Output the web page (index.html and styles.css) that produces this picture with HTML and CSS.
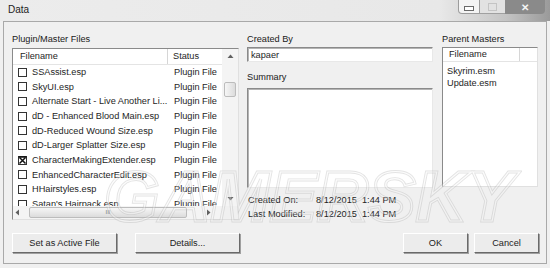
FILE: index.html
```html
<!DOCTYPE html>
<html lang="en">
<head>
  <meta charset="UTF-8" />
  <title>Data</title>
  <link rel="stylesheet" href="styles.css">
</head>
<body>
  <div class="titlebar">
    <span class="title">Data</span>
    <div class="controls">
      <div class="ctl ctl-min"><span></span></div>
      <div class="ctl ctl-max"><span></span></div>
      <div class="ctl ctl-close">&#x2715;</div>
    </div>
  </div>

  <div class="client">
    <div class="main">
      <div class="col-left">
        <div class="label label-left">Plugin/Master Files</div>
        <div class="listview">
          <div class="lv-body">
            <div class="lv-head">
              <div class="hcell hcell-name">Filename</div>
              <div class="hcell hcell-status">Status</div>
            </div>
            <div class="lv-rows">
              <div class="row"><div class="cell-name"><span class="chk"></span>SSAssist.esp</div><div class="cell-status">Plugin File</div></div>
              <div class="row"><div class="cell-name"><span class="chk"></span>SkyUI.esp</div><div class="cell-status">Plugin File</div></div>
              <div class="row"><div class="cell-name"><span class="chk"></span>Alternate Start - Live Another Li...</div><div class="cell-status">Plugin File</div></div>
              <div class="row"><div class="cell-name"><span class="chk"></span>dD - Enhanced Blood Main.esp</div><div class="cell-status">Plugin File</div></div>
              <div class="row"><div class="cell-name"><span class="chk"></span>dD-Reduced Wound Size.esp</div><div class="cell-status">Plugin File</div></div>
              <div class="row"><div class="cell-name"><span class="chk"></span>dD-Larger Splatter Size.esp</div><div class="cell-status">Plugin File</div></div>
              <div class="row"><div class="cell-name"><span class="chk checked"><svg width="9" height="9" viewBox="0 0 9 9"><rect x="0.5" y="0.5" width="8" height="8" fill="#fff" stroke="#333"/><path d="M1.5 1.5 L7.5 7.5 M7.5 1.5 L1.5 7.5" stroke="#111" stroke-width="1.5"/><path d="M0.5 1 H8.5" stroke="#111" stroke-width="1.5"/></svg></span>CharacterMakingExtender.esp</div><div class="cell-status">Plugin File</div></div>
              <div class="row"><div class="cell-name"><span class="chk"></span>EnhancedCharacterEdit.esp</div><div class="cell-status">Plugin File</div></div>
              <div class="row"><div class="cell-name"><span class="chk"></span>HHairstyles.esp</div><div class="cell-status">Plugin File</div></div>
              <div class="row"><div class="cell-name"><span class="chk"></span>Satan's Hairpack.esp</div><div class="cell-status">Plugin File</div></div>
            </div>
            <div class="hscroll">
              <svg class="arrow" width="5" height="7" viewBox="0 0 5 7"><path d="M4 0.5 L0.5 3.5 L4 6.5 Z" fill="#606060"/></svg>
              <div class="hthumb">III</div>
              <svg class="arrow" width="5" height="7" viewBox="0 0 5 7"><path d="M1 0.5 L4.5 3.5 L1 6.5 Z" fill="#606060"/></svg>
            </div>
          </div>
          <div class="vscroll">
            <svg class="arrow-up" width="7" height="5" viewBox="0 0 7 5"><path d="M0.5 4 L3.5 0.5 L6.5 4 Z" fill="#606060"/></svg>
            <div class="vthumb"></div>
            <svg class="arrow-down" width="7" height="5" viewBox="0 0 7 5"><path d="M0.5 1 L3.5 4.5 L6.5 1 Z" fill="#606060"/></svg>
            <div class="corner"></div>
          </div>
        </div>
      </div>

      <div class="col-mid">
        <div class="label">Created By</div>
        <div class="field">kapaer</div>
        <div class="label label-summary">Summary</div>
        <div class="textarea"></div>
        <div class="info">
          <div class="info-row"><span class="info-key">Created On:</span><span>8/12/2015&nbsp; 1:44 PM</span></div>
          <div class="info-row"><span class="info-key">Last Modified:</span><span>8/12/2015&nbsp; 1:44 PM</span></div>
        </div>
      </div>

      <div class="col-right">
        <div class="label">Parent Masters</div>
        <div class="masters">
          <div class="m-head">
            <div class="m-hcell">Filename</div>
            <div class="m-hcell m-hcell-empty"></div>
          </div>
          <div class="m-rows">
            <div class="m-row">Skyrim.esm</div>
            <div class="m-row">Update.esm</div>
          </div>
        </div>
      </div>
    </div>

    <div class="buttons">
      <div class="btn btn-active">Set as Active File</div>
      <div class="btn btn-details">Details...</div>
      <div class="btn btn-ok">OK</div>
      <div class="btn btn-cancel">Cancel</div>
    </div>
  </div>

  <div class="watermark"><span class="wm-outer">GAMERSKY</span><span class="wm-inner">GAMERSKY</span></div>
</body>
</html>
```

FILE: styles.css
```css
body {
  margin: 0;
  width: 550px;
  height: 268px;
  overflow: hidden;
  position: relative;
  background: #f0f0f0;
  font-family: "Liberation Sans", Arial, sans-serif;
  font-size: 9.2px;
  color: #1e1e1e;
}
.titlebar {
  height: 21px;
  display: flex;
  align-items: flex-start;
  padding-left: 8px;
  background: linear-gradient(to right, #ececec 0%, #e8e8e8 80%, #c4c4c4 92%, #9a9a9a 100%);
}
.title {
  line-height: 20px;
  font-size: 10px;
  color: #222;
}
.controls {
  margin-left: auto;
  margin-right: 5px;
  display: flex;
  height: 14px;
}
.ctl {
  height: 14px;
  box-sizing: border-box;
  display: flex;
  align-items: center;
  justify-content: center;
}
.ctl-min {
  width: 22px;
  border: 1px solid #9c9c9c;
  border-top: none;
  border-radius: 0 0 0 4px;
  background: #f4f4f4;
}
.ctl-min span {
  width: 8px;
  height: 3px;
  border: 1px solid #6a6a6a;
  background: #fff;
  margin-top: 3px;
}
.ctl-max {
  width: 25px;
  border-bottom: 1px solid #a0a0a0;
  background: #e2e2e2;
}
.ctl-max span {
  width: 7px;
  height: 6px;
  border: 1px solid #c4c4c4;
}
.ctl-close {
  width: 40px;
  background: #8a8a8a;
  border-radius: 0 0 4px 0;
  color: #f4f4f4;
  font-size: 10px;
  font-weight: bold;
}
.client {
  margin-left: 3px;
  width: 544px;
  height: 243px;
  box-sizing: border-box;
  border: 1px solid #a9a9a9;
  background: #f0f0f0;
  padding: 11px 7px 0 8px;
  display: flex;
  flex-direction: column;
}
.main {
  display: flex;
  align-items: flex-start;
}
.label {
  line-height: 12px;
  height: 12px;
  margin-bottom: 2px;
  color: #202020;
}
.label-left {
  margin-bottom: 3px;
}
.col-left {
  width: 227px;
}
.listview {
  height: 172px;
  box-sizing: border-box;
  border: 1px solid #8a8a8a;
  border-right-color: #e0e0e0;
  border-bottom-color: #e0e0e0;
  background: #fff;
  display: flex;
}
.lv-body {
  flex: 1;
  display: flex;
  flex-direction: column;
  min-width: 0;
}
.lv-head {
  display: flex;
  height: 16px;
  box-sizing: border-box;
  border-bottom: 1px solid #e4e4e4;
}
.hcell {
  line-height: 15px;
  box-sizing: border-box;
}
.hcell-name {
  width: 155px;
  padding-left: 7px;
  border-right: 1px solid #d6d6d6;
}
.hcell-status {
  padding-left: 5px;
}
.lv-rows {
  height: 141px;
  overflow: hidden;
}
.row {
  display: flex;
  height: 14.67px;
  line-height: 14.67px;
  white-space: nowrap;
}
.cell-name {
  width: 155px;
  padding-left: 5px;
  box-sizing: border-box;
  display: flex;
  align-items: center;
  overflow: hidden;
}
.cell-status {
  padding-left: 6px;
}
.chk {
  width: 9px;
  height: 9px;
  box-sizing: border-box;
  border: 1px solid #333;
  background: #fff;
  margin-right: 5px;
  flex-shrink: 0;
}
.chk.checked {
  border: none;
  background: none;
}
.chk svg {
  display: block;
}
.hscroll {
  height: 13px;
  background: #f4f4f4;
  display: flex;
  align-items: center;
  padding-left: 2px;
}
.hthumb {
  width: 158px;
  height: 11px;
  margin-left: 9px;
  margin-right: 19px;
  box-sizing: border-box;
  border: 1px solid #bcbcbc;
  border-radius: 2px;
  background: linear-gradient(#f6f6f6, #dcdcdc);
  font-size: 6px;
  line-height: 9px;
  text-align: center;
  color: #777;
}
.vscroll {
  width: 16px;
  background: #f4f4f4;
  display: flex;
  flex-direction: column;
  align-items: center;
}
.arrow-up {
  margin-top: 5px;
}
.vthumb {
  width: 12px;
  height: 15px;
  margin-top: 23px;
  box-sizing: border-box;
  border: 1px solid #bcbcbc;
  border-radius: 2px;
  background: linear-gradient(to right, #f6f6f6, #dcdcdc);
}
.arrow-down {
  margin-top: auto;
  margin-bottom: 5px;
}
.corner {
  width: 16px;
  height: 13px;
  background: #f0f0f0;
}
.col-mid {
  width: 186px;
  margin-left: 8px;
}
.field {
  height: 15px;
  line-height: 14px;
  box-sizing: border-box;
  border: 1px solid #8a8a8a;
  border-right-color: #e8e8e8;
  border-bottom-color: #e8e8e8;
  box-shadow: inset 1px 1px 0 #b4b4b4;
  background: #fff;
  padding-left: 3px;
}
.label-summary {
  margin-top: 9px;
  margin-bottom: 5px;
}
.textarea {
  height: 100px;
  box-sizing: border-box;
  border: 1px solid #8a8a8a;
  border-right-color: #e8e8e8;
  border-bottom-color: #e8e8e8;
  box-shadow: inset 1px 1px 0 #b4b4b4;
  background: #fff;
}
.info {
  margin-top: 5px;
  padding-left: 1px;
}
.info-row {
  display: flex;
  line-height: 14px;
}
.info-key {
  width: 68px;
}
.col-right {
  width: 96px;
  margin-left: 9px;
}
.masters {
  height: 140px;
  box-sizing: border-box;
  border: 1px solid #8a8a8a;
  border-right-color: #e0e0e0;
  border-bottom-color: #e0e0e0;
  background: #fff;
}
.m-head {
  display: flex;
  height: 14px;
  box-sizing: border-box;
  border-bottom: 1px solid #e4e4e4;
}
.m-hcell {
  width: 77px;
  padding-left: 6px;
  box-sizing: border-box;
  line-height: 13px;
  border-right: 1px solid #d6d6d6;
}
.m-hcell-empty {
  width: 17px;
  border-right: none;
}
.m-rows {
  padding-top: 4px;
}
.m-row {
  height: 11.6px;
  line-height: 11.6px;
  padding-left: 4px;
}
.buttons {
  display: flex;
  margin-top: 12px;
}
.btn {
  height: 20px;
  box-sizing: border-box;
  border: 1px solid #ffffff;
  border-right-color: #6a6a6a;
  border-bottom-color: #6a6a6a;
  box-shadow: 1px 1px 0 #a0a0a0;
  background: #ececec;
  text-align: center;
  line-height: 18px;
  color: #222;
}
.btn-active {
  width: 105px;
}
.btn-details {
  width: 105px;
  margin-left: 18px;
}
.btn-ok {
  width: 65px;
  margin-left: auto;
}
.btn-cancel {
  width: 65px;
  margin-left: 6px;
}
.watermark {
  position: absolute;
  left: 104px;
  top: 161px;
  height: 71px;
  pointer-events: none;
  opacity: 0.35;
}
.watermark span {
  position: absolute;
  left: 0;
  top: 0;
  font-family: "Liberation Sans", Arial, sans-serif;
  font-size: 71px;
  line-height: 71px;
  font-weight: bold;
  font-style: italic;
  color: transparent;
  white-space: nowrap;
}
.wm-outer {
  -webkit-text-stroke: 3px #b0b0b0;
}
.wm-inner {
  -webkit-text-stroke: 1.2px #f8f8f8;
}
```
